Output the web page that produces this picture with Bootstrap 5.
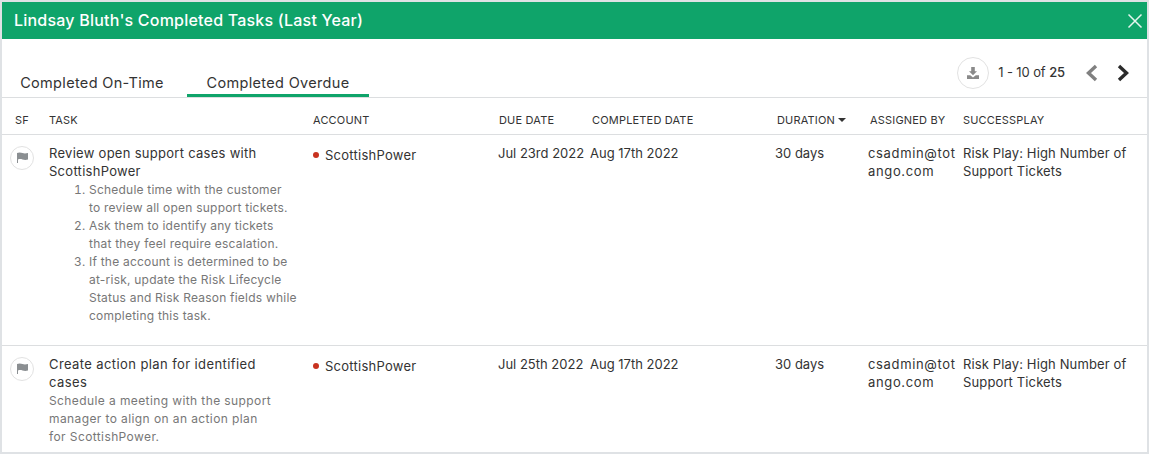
<!DOCTYPE html>
<html lang="en"><head><meta charset="utf-8"><title>Completed Tasks</title>
<link href="https://cdn.jsdelivr.net/npm/bootstrap@5.3.0/dist/css/bootstrap.min.css" rel="stylesheet">
<style>
html,body{height:100%;overflow:hidden}
body{background:#dfe2e5;padding:2px 2px 2px 2px;font-family:Inter,"Noto Sans",sans-serif;color:#333}
.shell{height:450px;background:#fff;overflow:hidden}
.head{height:37px;background:#0fa46a;color:#fff;padding:0 4px 0 12px}
.head h1{font-size:16px;font-weight:500;margin:0;letter-spacing:.21px}
.closer{width:16px;height:16px;display:block}
.tabbar{height:59px;border-bottom:1px solid #dcdee0;padding:0 16px 0 0}
.tabs{align-self:flex-end;gap:0}
.tabitem{display:block;font-size:14.5px;letter-spacing:.33px;color:#333;height:22px;line-height:15px;text-align:center;text-decoration:none;white-space:nowrap}
.tab-a{width:185px;padding-right:5px}
.tab-b{width:182px;border-bottom:3px solid #0fa46a}
.tools{padding-top:9px}
.dl{width:32px;height:32px;border:1px solid #e2e2e2;border-radius:50%;background:#fff;padding:0;margin-right:9px}
.pager{font-size:13px;margin-right:19px;letter-spacing:-.1px}
.pager b{font-weight:500}
.arrow{display:block;width:15px;height:20px}
.arrow+.arrow{margin-left:17px}
.tasks{table-layout:fixed;width:100%;margin:0;font-size:13px;line-height:18px;color:#333}
.tasks th{font-size:11px;font-weight:400;padding:14px 0 4px;height:36px;line-height:17px;white-space:nowrap;border-bottom:1px solid #dcdee0;letter-spacing:.18px}
.tasks td{padding:9px 0 20px;border-bottom:1px solid #dcdee0;vertical-align:top;white-space:nowrap}
.c1{width:47px}.c2{width:264px}.c3{width:185px}.c4{width:92px}.c5{width:185px}.c6{width:93px}.c7{width:95px}
.tasks th.sf{padding-left:13px}
.tasks th.shift{padding-left:1px}
.tasks th.shift2{padding-left:2px}
.wide{letter-spacing:.28px}
.wider{letter-spacing:.4px}
.email{letter-spacing:.65px}
.play{letter-spacing:.13px}
.flag{width:24px;height:24px;border:1px solid #e2e2e2;border-radius:50%;display:flex;align-items:center;justify-content:center;margin:2px 0 0 8px}
.sub{color:#777;font-size:12px;margin:1px 0 0;letter-spacing:.4px}
ol.sub{padding:0 0 0 40px;letter-spacing:.22px}
.dot{display:inline-block;width:6px;height:6px;background:#c8321f;border-radius:50%;margin:0 6px 2px 0}
.acct{padding-top:2px;display:block;letter-spacing:.25px}
.caret{display:inline-block;border:4px solid transparent;border-top-color:#333;border-bottom:0;margin-left:3px;vertical-align:2px}
</style></head>
<body>
<div class="shell">
 <div class="head d-flex align-items-center justify-content-between">
  <h1>Lindsay Bluth's Completed Tasks (Last Year)</h1>
  <svg class="closer" viewBox="0 0 16 16" fill="none" stroke="#e6f6ef" stroke-width="1.5"><path d="M1.500 1.500l13 13M14.500 1.500l-13 13"/></svg>
 </div>
 <div class="tabbar d-flex justify-content-between">
  <div class="tabs d-flex">
   <a class="tabitem tab-a" href="#">Completed On-Time</a>
   <a class="tabitem tab-b" href="#">Completed Overdue</a>
  </div>
  <div class="tools d-flex align-items-center">
   <button class="dl d-flex align-items-center justify-content-center" type="button" aria-label="Download">
    <svg width="14" height="14" viewBox="0 0 14 14" fill="#8a8a8a"><path d="M5.200 1h3.600v4.200H11L7 9.200 3 5.200h2.200z"/><path d="M1 9.200h3.200L7 11.400l2.800-2.200H13V13H1z"/></svg>
   </button>
   <span class="pager">1 - 10 of <b>25</b></span>
   <svg class="arrow" viewBox="0 0 15 20" fill="none" stroke="#808080" stroke-width="3.400"><path d="M12 3 4.500 10l7.500 7"/></svg>
   <svg class="arrow" viewBox="0 0 15 20" fill="none" stroke="#2b2b2b" stroke-width="3.400"><path d="M3 3l7.500 7L3 17"/></svg>
  </div>
 </div>
 <table class="tasks">
  <colgroup><col class="c1"><col class="c2"><col class="c3"><col class="c4"><col class="c5"><col class="c6"><col class="c7"><col></colgroup>
  <thead><tr>
   <th class="sf">SF</th><th>TASK</th><th>ACCOUNT</th><th class="shift">DUE DATE</th><th class="shift2">COMPLETED DATE</th><th class="shift2">DURATION<span class="caret"></span></th><th class="shift2">ASSIGNED BY</th><th>SUCCESSPLAY</th>
  </tr></thead>
  <tbody>
  <tr>
   <td><span class="flag"><svg width="13" height="11" viewBox="0 0 13 11" fill="#8b8f92"><path d="M1 1c2-1 4-.6 5.500 0s3.500.5 5.500 0v6.500c-2 .7-4 .5-5.500 0s-3-.6-4.500 0V11H1z"/></svg></span></td>
   <td><span class="wide">Review open support cases with<br>ScottishPower</span>
    <ol class="sub"><li>Schedule time with the customer<br>to review all open support tickets.</li><li>Ask them to identify any tickets<br>that they feel require escalation.</li><li>If the account is determined to be<br>at-risk, update the Risk Lifecycle<br>Status and Risk Reason fields while<br>completing this task.</li></ol></td>
   <td><span class="acct"><span class="dot"></span>ScottishPower</span></td>
   <td>Jul 23rd 2022</td><td>Aug 17th 2022</td><td>30 days</td><td class="email">csadmin@tot<br>ango.com</td><td class="play">Risk Play: High Number of<br>Support Tickets</td>
  </tr>
  <tr>
   <td><span class="flag"><svg width="13" height="11" viewBox="0 0 13 11" fill="#8b8f92"><path d="M1 1c2-1 4-.6 5.500 0s3.500.5 5.500 0v6.500c-2 .7-4 .5-5.500 0s-3-.6-4.500 0V11H1z"/></svg></span></td>
   <td><span class="wider">Create action plan for identified<br>cases</span>
    <p class="sub">Schedule a meeting with the support<br>manager to align on an action plan<br>for ScottishPower.</p></td>
   <td><span class="acct"><span class="dot"></span>ScottishPower</span></td>
   <td>Jul 25th 2022</td><td>Aug 17th 2022</td><td>30 days</td><td class="email">csadmin@tot<br>ango.com</td><td class="play">Risk Play: High Number of<br>Support Tickets</td>
  </tr>
  </tbody>
 </table>
</div>
<script src="https://cdn.jsdelivr.net/npm/bootstrap@5.3.0/dist/js/bootstrap.bundle.min.js"></script>
</body></html>
